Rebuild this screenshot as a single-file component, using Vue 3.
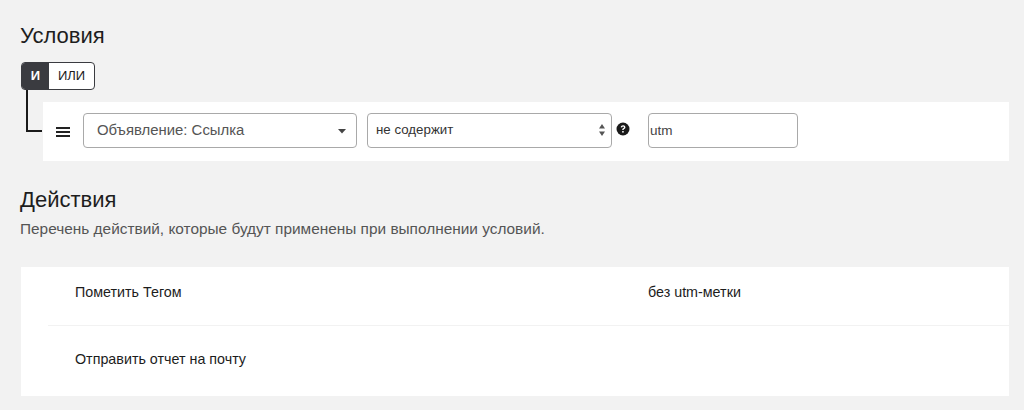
<script setup>
const actions = [
  { name: 'Пометить Тегом', value: 'без utm-метки' },
  { name: 'Отправить отчет на почту', value: '' },
]
</script>

<template>
  <div class="page">
    <h2 class="title">Условия</h2>
    <div class="toggle">
      <span class="seg active">И</span>
      <span class="seg">ИЛИ</span>
    </div>
    <div class="rule">
      <span class="connector"></span>
      <svg class="burger" viewBox="0 0 14 12" width="14" height="12">
        <path d="M0 1h14v2H0zM0 5h14v2H0zM0 9h14v2H0z" fill="#222" />
      </svg>
      <div class="field field-a">
        <span>Объявление: Ссылка</span>
        <svg class="caret" viewBox="0 0 8 5" width="8" height="5"><path d="M0 0h8L4 4.500z" fill="#444" /></svg>
      </div>
      <div class="field field-b">
        <span>не содержит</span>
        <svg class="updown" viewBox="0 0 6 12" width="6" height="12">
          <path d="M3 0l3 4.500H0zM3 12L0 7.500h6z" fill="#555" />
        </svg>
      </div>
      <svg class="help" viewBox="0 0 14 14" width="14" height="14">
        <circle cx="7" cy="7" r="6.500" fill="#1a1a1a" />
        <path d="M4.700 5.300C4.900 4 5.900 3.300 7.100 3.300c1.300 0 2.300.8 2.300 2 0 1-.6 1.400-1.200 1.800-.5.300-.6.500-.6 1H6.200c0-1 .3-1.500 1-1.900.5-.3.800-.5.800-.9 0-.4-.4-.7-.9-.7-.6 0-.9.3-1 .9z" fill="#fff" />
        <rect x="6.200" y="9" width="1.500" height="1.600" fill="#fff" />
      </svg>
      <div class="field field-c">utm</div>
    </div>

    <h2 class="title second">Действия</h2>
    <p class="desc">Перечень действий, которые будут применены при выполнении условий.</p>
    <div class="actions">
      <div v-for="a in actions" :key="a.name" class="action">
        <span class="name">{{ a.name }}</span>
        <span class="value">{{ a.value }}</span>
      </div>
    </div>
  </div>
</template>

<style scoped>
.page {
  box-sizing: border-box;
  width: 1024px;
  height: 410px;
  padding: 23px 15px 0 21px;
  background: #f2f2f2;
  font-family: "Liberation Sans", Arial, sans-serif;
  font-size: 14.3px;
  color: #1c1c1c;
  overflow: hidden;
}
.title {
  margin: 0 0 0 -1px;
  font-size: 22px;
  line-height: 26px;
  font-weight: 400;
  color: #1e1e1e;
}
.toggle {
  display: inline-flex;
  margin-top: 13px;
  height: 28px;
  box-sizing: border-box;
  border: 1px solid #3a3b40;
  border-radius: 4px;
  background: #fff;
  overflow: hidden;
  vertical-align: top;
}
.seg {
  display: flex;
  align-items: center;
  justify-content: center;
  width: 45px;
  padding-bottom: 2px;
  font-size: 13px;
}
.seg.active {
  width: 27px;
  background: #3a3b40;
  color: #fff;
  font-weight: 700;
}
.rule {
  position: relative;
  display: flex;
  align-items: center;
  box-sizing: border-box;
  height: 59px;
  margin: 12px 0 0 22px;
  padding: 0 0 2px 13px;
  background: #fff;
}
.connector {
  position: absolute;
  left: -17px;
  top: -12px;
  width: 16px;
  height: 42px;
  border-left: 2px solid #1a1a1a;
  border-bottom: 2px solid #1a1a1a;
  box-sizing: border-box;
}
.burger {
  flex: none;
  margin-top: 2px;
}
.field {
  box-sizing: border-box;
  display: flex;
  align-items: center;
  justify-content: space-between;
  height: 35px;
  background: #fff;
  border: 1px solid #a9a9a9;
  border-radius: 4px;
}
.field-a {
  width: 274px;
  margin-left: 13px;
  padding: 0 10px 2px 13px;
  font-size: 14.9px;
  color: #555;
}
.caret {
  flex: none;
  margin-top: 4px;
}
.field-b {
  width: 245px;
  margin-left: 10px;
  padding: 0 6px 2px 8px;
  font-size: 13.3px;
  color: #333;
}
.updown {
  flex: none;
}
.help {
  flex: none;
  margin: 0 0 4px 4px;
}
.field-c {
  width: 150px;
  margin-left: 18px;
  padding: 0 1px;
  font-size: 13.5px;
  color: #444;
}
.second {
  margin-top: 26px;
}
.desc {
  margin: 7px 0 0 -1px;
  font-size: 15.4px;
  line-height: 18px;
  color: #555;
}
.actions {
  margin-top: 29px;
  height: 129px;
  padding-left: 27px;
  background: #fff;
}
.action {
  box-sizing: border-box;
  display: flex;
  align-items: center;
  height: 58px;
  padding: 0 0 8px 27px;
}
.action + .action {
  height: 71px;
  padding-bottom: 5px;
  border-top: 1px solid #f2f2f2;
}
.name {
  width: 573px;
}
</style>
